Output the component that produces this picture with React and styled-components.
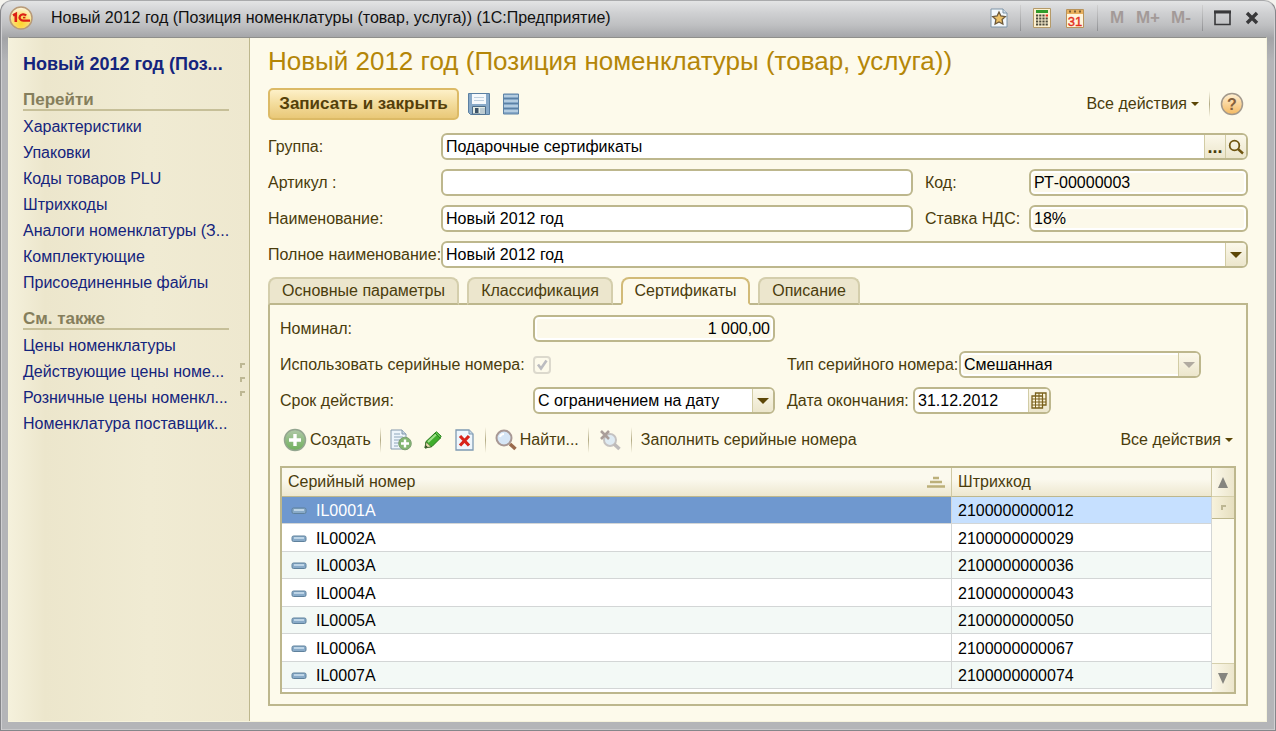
import React from 'react';
import styled, { createGlobalStyle, css } from 'styled-components';

const line = '#bdb78d';
const ink = '#4a3c0c';

const GlobalStyle = createGlobalStyle`
  * { box-sizing: border-box; }
  body {
    margin: 0;
    background: #f4f3ee;
    font: 16px/20px "Liberation Sans", Arial, sans-serif;
    color: ${ink};
  }
  button, input, select { font: inherit; color: inherit; }
  button { padding: 0; border: 0; background: none; }
`;

const Window = styled.div`
  min-height: 100vh;
  display: flex;
  flex-direction: column;
  padding: 0 8px 8px 7px;
  border: 1px solid #85868a;
  border-top-color: #a9aaac;
  border-radius: 12px 12px 0 0;
  background: linear-gradient(#e3e4e5 0, #cfd0d2 12px, #bfc0c2 24px, #a3a4a7 37px, #b4b5b8 60px, #b4b5b8 100%);
  box-shadow: inset 1px 0 #d0d0d2, inset -1px 0 #d0d0d2, inset 0 -1px #c8c8ca;
`;

const TitleBar = styled.header`
  height: 36px;
  display: flex;
  align-items: center;
  padding: 0 4px 3px 1px;
  color: #111;
`;

const Caption = styled.span`
  flex: 1;
  margin-left: 18px;
  white-space: nowrap;
  overflow: hidden;
`;

const WindowTools = styled.div`
  display: flex;
  align-items: center;
  gap: 10px;
`;

const IconButton = styled.button`
  display: flex;
  align-items: center;
  justify-content: center;
  flex: none;
  width: ${(p) => p.$width || 22}px;
  height: 24px;
`;

const MemoryButton = styled(IconButton)`
  font: bold 17px/20px "Liberation Sans", Arial, sans-serif;
  color: #a39a98;
`;

const BarDivider = styled.i`
  width: 1px;
  height: 26px;
  background: linear-gradient(#d0d0d0, #909194);
`;

const Body = styled.div`
  flex: 1;
  display: flex;
  border: 1px solid #f6f3dc;
  border-top-color: #8f8f8b;
  background: #fdfaeb;
`;

const Sidebar = styled.aside`
  flex: none;
  width: 241px;
  display: flex;
  padding-left: 14px;
  border-right: 1px solid ${line};
  background: linear-gradient(90deg, #f5f1dc, #ece6cc 36px, #f0ebd3 140px, #eee8cf);
`;

const Nav = styled.nav`
  flex: 1;
  min-width: 0;
  padding-top: 13px;
`;

const NavTitle = styled.a`
  display: block;
  font: bold 18px/26px "Liberation Sans", Arial, sans-serif;
  color: #14247d;
  text-decoration: none;
  white-space: nowrap;
`;

const NavHeading = styled.h2`
  margin: 14px 0 3px;
  border-bottom: 2px solid #c6bf98;
  font: bold 17px/18px "Liberation Sans", Arial, sans-serif;
  color: #857e5c;
`;

const NavLink = styled.a`
  display: block;
  line-height: 26px;
  color: #14247d;
  text-decoration: none;
  white-space: nowrap;
`;

const Splitter = styled.div`
  width: 20px;
  display: flex;
  flex-direction: column;
  align-items: flex-end;
  justify-content: center;
  gap: 9px;
  padding-right: 4px;
`;

const Grip = styled.i`
  width: 5px;
  height: 5px;
  border: solid #bdb793;
  border-width: 2px 0 0 2px;
`;

const Main = styled.main`
  flex: 1;
  min-width: 0;
  display: flex;
  flex-direction: column;
  padding: 9px 18px 15px 18px;
`;

const Heading = styled.h1`
  margin: 0;
  font: 26px/28px "Liberation Sans", Arial, sans-serif;
  color: #b48608;
  white-space: nowrap;
`;

const CommandBar = styled.div`
  display: flex;
  align-items: center;
  gap: 10px;
  padding-right: 4px;
  margin: 13px 0;
`;

const PrimaryButton = styled.button`
  height: 32px;
  width: 191px;
  margin-right: -1px;
  border: 2px solid #dcba66;
  border-radius: 5px;
  background: linear-gradient(#fdf0c8, #f3dc9c 50%, #e9c878);
  font-weight: bold;
  font-size: 17px;
  color: #54400a;
  white-space: nowrap;
`;

const Spacer = styled.span`
  flex: 1;
`;

const MenuButton = styled.button`
  display: flex;
  align-items: center;
  gap: 4px;
  white-space: nowrap;
`;

const Caret = styled.i`
  border: solid transparent;
  border-width: ${(p) => (p.$large ? '6px 6px 0' : '4px 4px 0')};
  border-top-color: ${(p) => (p.$dim ? '#b0aaa0' : '#5c4606')};
`;

const Divider = styled.i`
  width: 1px;
  height: 26px;
  background: linear-gradient(#fdfaeb, #b3ab85, #fdfaeb);
`;

const Fields = styled.div`
  display: grid;
  grid-template-columns: 173px minmax(0, 1fr) 116px 219px;
  row-gap: 9px;
  align-items: center;
`;

const Label = styled.label`
  width: ${(p) => (p.$width ? p.$width + 'px' : 'auto')};
  padding-left: ${(p) => (p.$inset ? 12 : 0)}px;
  white-space: nowrap;
`;

const Box = styled.div`
  display: flex;
  width: ${(p) => (p.$width ? p.$width + 'px' : 'auto')};
  height: 27px;
  border: 2px solid ${line};
  border-radius: 6px;
  overflow: hidden;
  background: #fff;
  color: #000;
  ${(p) => p.$wide && css`grid-column: span 3;`}
  ${(p) => p.$readOnly && css`
    background: #fcf9ea;
    box-shadow: inset 0 0 0 2px #fff;
  `}
`;

const control = css`
  flex: 1;
  min-width: 0;
  height: 23px;
  padding: 1px 3px 0;
  border: 0;
  outline: 0;
  background: transparent;
  color: #000;
  opacity: 1;
`;

const TextInput = styled.input`
  ${control}
  text-align: ${(p) => (p.$right ? 'right' : 'left')};
`;

const Select = styled.select`
  ${control}
  appearance: none;
`;

const BoxButton = styled.button`
  flex: none;
  display: flex;
  align-items: center;
  justify-content: center;
  width: 21px;
  border-left: 1px solid #d2cca5;
  background: linear-gradient(#fbf8ea, #ece6cc);
  color: ${ink};
`;

const Dots = styled.span`
  font-weight: bold;
  font-size: 18px;
`;

const Tabs = styled.div`
  display: flex;
  gap: 8px;
  padding-top: 9px;
  margin-bottom: -2px;
`;

const Tab = styled.button`
  position: relative;
  height: 28px;
  width: ${(p) => p.$width}px;
  border: 2px solid ${(p) => (p.$active ? '#d2bb78' : '#d4ceac')};
  border-bottom: ${(p) => (p.$active ? '2px solid #fdfaeb' : `2px solid ${line}`)};
  border-radius: 8px 8px 0 0;
  background: ${(p) => (p.$active ? '#fdfaeb' : '#ece6cd')};
  color: ${ink};
  white-space: nowrap;
`;

const Panel = styled.section`
  flex: 1;
  display: flex;
  flex-direction: column;
  padding: 10px 10px;
  border: 2px solid ${line};
`;

const PanelRow = styled.div`
  display: flex;
  align-items: center;
  height: 27px;
  margin-bottom: 9px;
`;

const Cell = styled.div`
  width: 242px;
`;

const Tick = styled.span`
  display: grid;
  width: 18px;
  height: 18px;
  > * { grid-area: 1 / 1; }
  svg { pointer-events: none; }
`;

const CheckInput = styled.input`
  appearance: none;
  margin: 0;
  width: 18px;
  height: 18px;
  border: 2px solid #dcd9cd;
  border-radius: 4px;
`;

const ListBar = styled.div`
  display: flex;
  align-items: center;
  gap: 9px;
  height: 34px;
  padding: 0 3px;
  margin-bottom: 9px;
`;

const TextButton = styled.button`
  display: flex;
  align-items: center;
  gap: 3px;
  white-space: nowrap;
`;

const Grid = styled.div`
  display: flex;
  flex: 1;
  border: 2px solid ${line};
  background: #fff;
`;

const Table = styled.table`
  flex: 1;
  align-self: flex-start;
  table-layout: fixed;
  border-collapse: separate;
  border-spacing: 0;
`;

const HeadCell = styled.th`
  width: ${(p) => p.$width || 'auto'};
  height: 29px;
  padding: 0 6px;
  border-bottom: 1px solid ${line};
  border-right: 1px solid #cfc9a4;
  background: linear-gradient(#fbf9ee 40%, #ede7cf);
  font-weight: normal;
  text-align: left;
`;

const HeadLabel = styled.div`
  display: flex;
  align-items: center;
  justify-content: space-between;
`;

const Row = styled.tr`
  height: 28px;
  &:nth-child(odd) { height: 27px; }
`;

const DataCell = styled.td`
  padding: 2px 6px 0;
  border-bottom: 1px solid #d3d6d6;
  border-right: 1px solid #d3d6d6;
  color: ${(p) => (p.$key && p.$selected ? '#fff' : '#000')};
  background: ${(p) => (p.$selected ? (p.$key ? '#6f98cf' : '#c6e0ff') : p.$striped ? '#f3f9f6' : '#fff')};
`;

const KeyLabel = styled.div`
  display: flex;
  align-items: center;
  gap: 9px;
  padding-left: 3px;
`;

const ScrollBar = styled.div`
  flex: none;
  display: flex;
  flex-direction: column;
  width: 22px;
  background: #fdfbef;
`;

const ScrollButton = styled.button`
  display: flex;
  align-items: center;
  justify-content: center;
  height: 29px;
  border: 1px solid #d6d0ac;
  border-width: ${(p) => (p.$down ? '1px 0 0' : '0 0 1px')};
  background: linear-gradient(90deg, #fbf8ea, #ece6cc);
`;

const Thumb = styled.div`
  display: flex;
  align-items: center;
  justify-content: center;
  height: 22px;
  border-bottom: 1px solid ${line};
  background: linear-gradient(90deg, #f7f2dc, #e6dfbf);
`;

const IconText = styled.text`
  font-family: "Liberation Sans", Arial, sans-serif;
  font-size: ${(p) => p.$size}px;
  font-weight: ${(p) => (p.$bold ? 'bold' : 'normal')};
  text-anchor: middle;
`;

const Logo = () => (
  <svg width="24" height="24" viewBox="0 0 24 24" aria-hidden="true">
    <defs>
      <radialGradient id="lg" cx=".5" cy=".75" r=".75">
        <stop offset="0" stopColor="#ffd42c" /><stop offset=".55" stopColor="#fbe07c" /><stop offset="1" stopColor="#fff8e4" />
      </radialGradient>
    </defs>
    <circle cx="12" cy="12" r="11" fill="url(#lg)" stroke="#b89a78" strokeWidth="1.5" />
    <path d="M4 9.300 6.800 7.800V16" fill="none" stroke="#dc1f14" strokeWidth="2.600" />
    <path d="M17.200 9.600a3.700 3.100 0 1 0-2.900 5H21" fill="none" stroke="#dc1f14" strokeWidth="2.200" />
    <path d="M14 11.600h2.400" stroke="#dc1f14" strokeWidth="1.600" />
  </svg>
);

const StarPage = () => (
  <svg width="18" height="20" viewBox="0 0 18 20">
    <path d="M1 1h12l4 4v14H1z" fill="#f3f8fc" stroke="#7f95a8" />
    <path d="M13 1v4h4" fill="#cfdde8" stroke="#7f95a8" />
    <path d="m9 4 1.900 4 4.400.6-3.200 3 .8 4.400L9 13.900 5.100 16l.8-4.400-3.200-3 4.400-.6z" fill="#ecc16a" stroke="#6d5a3c" strokeWidth="1.300" />
  </svg>
);

const Calculator = () => (
  <svg width="18" height="20" viewBox="0 0 18 20">
    <path d="M.5.5h17v19H.5z" fill="#fbf0d0" stroke="#b59a68" />
    <path d="M3 2h12v3H3z" fill="#2f9b2a" />
    <path d="M3 7.500h9M3 10.500h12M3 13.500h12M3 16.500h12" stroke="#4c4a3c" strokeWidth="1.800" strokeDasharray="2.200 1" />
    <path d="M12.600 7.500h2.400" stroke="#e03020" strokeWidth="2" />
  </svg>
);

const Calendar31 = () => (
  <svg width="18" height="20" viewBox="0 0 18 20">
    <path d="M.5 1.500h17v18H.5z" fill="#fff4dc" stroke="#b8935a" />
    <path d="M1 2h16v4H1z" fill="#e8b05e" />
    <path d="M3 3.500h2M8 3.500h2M13 3.500h2" stroke="#7c5f33" strokeWidth="2" />
    <IconText x="9" y="17.500" $size={13} fill="#e3301c" stroke="#e3301c" strokeWidth=".4">31</IconText>
  </svg>
);

const Maximize = () => (
  <svg width="17" height="16" viewBox="0 0 17 16">
    <path d="M1 1.500h15v13H1z" fill="none" stroke="#38383a" strokeWidth="1.600" /><path d="M0 2h17" stroke="#38383a" strokeWidth="3" />
  </svg>
);

const Close = () => (
  <svg width="14" height="14" viewBox="0 0 14 14"><path d="m2 2 10 10M12 2 2 12" stroke="#38383a" strokeWidth="3.400" /></svg>
);

const Floppy = () => (
  <svg width="22" height="22" viewBox="0 0 22 22">
    <path d="M.5.5h21v21h-19l-2-2z" fill="#88a9c8" stroke="#5b80a2" />
    <path d="M4 1h14v10H4z" fill="#f6f9fc" /><path d="M6 4.500h10M6 7.500h10" stroke="#c0d0de" />
    <path d="M4.500 13.500h13V21h-13z" fill="#e4ebe4" stroke="#4e6d88" /><path d="M7 15h3.500v5H7z" fill="#3e5468" /><path d="M12 15h5v6h-5z" fill="#bccbd2" />
  </svg>
);

const Stack = () => (
  <svg width="16" height="22" viewBox="0 0 16 22">
    <path d="M.5 1h15v20H.5z" fill="#86a8c8" stroke="#5f83a6" />
    <path d="M1 3h14M1 8h14M1 13h14M1 18h14" stroke="#b4cce0" strokeWidth="2" /><path d="M1 5.500h14M1 10.500h14M1 15.500h14" stroke="#5b80a4" />
  </svg>
);

const Help = () => (
  <svg width="24" height="24" viewBox="0 0 24 24">
    <defs><linearGradient id="hp" x1="0" y1="0" x2="0" y2="1"><stop offset="0" stopColor="#fff0d4" /><stop offset="1" stopColor="#f4b961" /></linearGradient></defs>
    <circle cx="12" cy="12" r="10.500" fill="url(#hp)" stroke="#a3998c" strokeWidth="1.500" />
    <IconText x="12" y="17.500" $size={16} $bold fill="#85603c">?</IconText>
  </svg>
);

const Magnifier = () => (
  <svg width="16" height="16" viewBox="0 0 16 16"><circle cx="6.500" cy="6.500" r="4.800" fill="none" stroke="#6f5510" strokeWidth="1.800" /><path d="m10 10 5 4.500" stroke="#6f5510" strokeWidth="2.400" /></svg>
);

const DateGrid = () => (
  <svg width="16" height="17" viewBox="0 0 16 17">
    <path d="M4.500 1h10.500v12H4.500z" fill="#fbf5dc" stroke="#7a611c" strokeWidth="1.300" />
    <path d="M1 4h10.500v12H1z" fill="#fbf5dc" stroke="#7a611c" strokeWidth="1.300" />
    <path d="M1 7h14M1 10h14M1 13h10.500M4.500 4v12M8 1v15M11.500 1v12" stroke="#7a611c" />
  </svg>
);

const Check = () => (
  <svg width="18" height="18" viewBox="0 0 18 18"><path d="m5 8.500 3 4 5.500-8" fill="none" stroke="#bcbcc0" strokeWidth="2.600" /></svg>
);

const PlusBall = () => (
  <svg width="24" height="24" viewBox="0 0 24 24">
    <defs><linearGradient id="pb" x1="0" y1="0" x2="0" y2="1"><stop offset="0" stopColor="#b0c8a8" /><stop offset="1" stopColor="#6fb05c" /></linearGradient></defs>
    <circle cx="12" cy="12" r="10.500" fill="url(#pb)" stroke="#93a58f" strokeWidth="1.500" />
    <path d="M12 6v12M6 12h12" stroke="#fff" strokeWidth="3.400" />
  </svg>
);

const CopyAdd = () => (
  <svg width="22" height="22" viewBox="0 0 22 22">
    <path d="M1 1h11l4 4v15H1z" fill="#eef5fb" stroke="#8499ac" /><path d="M12 1v4h4" fill="#c6d6e4" stroke="#8499ac" />
    <path d="M4 5h6M4 8h9M4 11h7M4 14h5M4 17h4" stroke="#8ea6bb" />
    <circle cx="15" cy="14.500" r="6.300" fill="#83b672" stroke="#7d9f73" /><path d="M15 10.500v8M11 14.500h8" stroke="#fff" strokeWidth="2.400" />
  </svg>
);

const Pencil = () => (
  <svg width="18" height="18" viewBox="0 0 18 18">
    <path d="m1 17 1-6.500L11 2l5.500 5-8.500 8.500z" fill="#3fae2c" stroke="#23761a" />
    <path d="m4 11 8-7.500" stroke="#9fe08a" strokeWidth="2" /><path d="m11 2 1.500-1.200 4.700 4.400L16 7z" fill="#63c64e" stroke="#2a8420" />
    <path d="m1 17 1.200-6 5 4.800z" fill="#e6dcae" stroke="#4a6a34" strokeWidth=".8" /><path d="m1 17 .7-3 2.300 2.200z" fill="#2e4a26" />
  </svg>
);

const DeletePage = () => (
  <svg width="19" height="22" viewBox="0 0 19 22">
    <path d="M1 1h13l4 4v16H1z" fill="#eef6fc" stroke="#7f9ab2" strokeWidth="1.300" /><path d="M14 1v4h4" fill="#c6d6e4" stroke="#7f9ab2" />
    <path d="m5 7 9 9.500M14 7l-9 9.500" stroke="#d8231a" strokeWidth="3.200" />
  </svg>
);

const Find = ({ off }) => (
  <svg width="22" height="22" viewBox="0 0 22 22" opacity={off ? 0.75 : 1}>
    <circle cx={off ? 11 : 9} cy={off ? 11 : 9} r={off ? 6 : 7.5} fill="#d6e6f6" stroke={off ? '#b3b0b3' : '#a89894'} strokeWidth="2" />
    <path d="m15 15 5.500 5" stroke={off ? '#aaa6aa' : '#9a6a4c'} strokeWidth="3.600" />
    {off ? <path d="m2 2 8 8M10 2 2 10" stroke="#8f8080" strokeWidth="2.600" /> : <path d="M5 8a4 4 0 0 1 4-3" stroke="#fff" strokeWidth="2" fill="none" />}
  </svg>
);

const SortMark = () => (
  <svg width="18" height="12" viewBox="0 0 18 12"><path d="M6 2h6M3 6h12M0 10.500h18" stroke="#bcb07a" strokeWidth="2.600" /></svg>
);

const RowMark = () => (
  <svg width="16" height="8" viewBox="0 0 16 8"><rect x="1" y="1" width="14" height="5.500" rx="1.500" fill="#88aac8" stroke="#5f819c" /><path d="M3 3h10" stroke="#cfe2f0" strokeWidth="1.500" /></svg>
);

const Arrow = ({ down }) => (
  <svg width="10" height="11" viewBox="0 0 10 11"><path d={down ? 'M0 0h10L5 11z' : 'M5 0l5 11H0z'} fill="#85857f" /></svg>
);

const goTo = ['Характеристики', 'Упаковки', 'Коды товаров PLU', 'Штрихкоды', 'Аналоги номенклатуры (З...', 'Комплектующие', 'Присоединенные файлы'];
const seeAlso = ['Цены номенклатуры', 'Действующие цены номе...', 'Розничные цены номенкл...', 'Номенклатура поставщик...'];
const tabs = [['Основные параметры', 191], ['Классификация', 146], ['Сертификаты', 129], ['Описание', 102]];
const rows = [
  ['IL0001A', '2100000000012'],
  ['IL0002A', '2100000000029'],
  ['IL0003A', '2100000000036'],
  ['IL0004A', '2100000000043'],
  ['IL0005A', '2100000000050'],
  ['IL0006A', '2100000000067'],
  ['IL0007A', '2100000000074'],
];

export default function App() {
  return (
    <>
      <GlobalStyle />
      <Window>
        <TitleBar>
          <Logo />
          <Caption>Новый 2012 год (Позиция номенклатуры (товар, услуга)) (1С:Предприятие)</Caption>
          <WindowTools>
            <IconButton aria-label="Избранное"><StarPage /></IconButton>
            <BarDivider />
            <IconButton aria-label="Калькулятор"><Calculator /></IconButton>
            <IconButton aria-label="Календарь" $width={24}><Calendar31 /></IconButton>
            <BarDivider />
            <MemoryButton $width={18}>M</MemoryButton>
            <MemoryButton $width={24}>M+</MemoryButton>
            <MemoryButton>M-</MemoryButton>
            <BarDivider />
            <IconButton aria-label="Развернуть" $width={18}><Maximize /></IconButton>
            <IconButton aria-label="Закрыть"><Close /></IconButton>
          </WindowTools>
        </TitleBar>
        <Body>
          <Sidebar>
            <Nav>
              <NavTitle href="#">Новый 2012 год (Поз...</NavTitle>
              <NavHeading>Перейти</NavHeading>
              {goTo.map((t) => <NavLink href="#" key={t}>{t}</NavLink>)}
              <NavHeading>См. также</NavHeading>
              {seeAlso.map((t) => <NavLink href="#" key={t}>{t}</NavLink>)}
            </Nav>
            <Splitter><Grip /><Grip /><Grip /></Splitter>
          </Sidebar>
          <Main>
            <Heading>Новый 2012 год (Позиция номенклатуры (товар, услуга))</Heading>
            <CommandBar>
              <PrimaryButton>Записать и закрыть</PrimaryButton>
              <IconButton aria-label="Записать"><Floppy /></IconButton>
              <IconButton aria-label="Список"><Stack /></IconButton>
              <Spacer />
              <MenuButton>Все действия <Caret /></MenuButton>
              <Divider />
              <IconButton aria-label="Справка" $width={24}><Help /></IconButton>
            </CommandBar>
            <Fields>
              <Label htmlFor="group">Группа:</Label>
              <Box $wide>
                <TextInput id="group" defaultValue="Подарочные сертификаты" />
                <BoxButton aria-label="Выбрать"><Dots>...</Dots></BoxButton>
                <BoxButton aria-label="Открыть"><Magnifier /></BoxButton>
              </Box>
              <Label htmlFor="article">Артикул :</Label>
              <Box><TextInput id="article" /></Box>
              <Label htmlFor="code" $inset>Код:</Label>
              <Box $readOnly><TextInput id="code" readOnly value="РТ-00000003" /></Box>
              <Label htmlFor="name">Наименование:</Label>
              <Box><TextInput id="name" defaultValue="Новый 2012 год" /></Box>
              <Label htmlFor="vat" $inset>Ставка НДС:</Label>
              <Box $readOnly><TextInput id="vat" readOnly value="18%" /></Box>
              <Label htmlFor="full">Полное наименование:</Label>
              <Box $wide>
                <TextInput id="full" defaultValue="Новый 2012 год" />
                <BoxButton aria-label="Показать список"><Caret $large /></BoxButton>
              </Box>
            </Fields>
            <Tabs role="tablist">
              {tabs.map(([name, width], i) => (
                <Tab key={name} role="tab" aria-selected={i === 2} $active={i === 2} $width={width}>{name}</Tab>
              ))}
            </Tabs>
            <Panel>
              <PanelRow>
                <Label htmlFor="nominal" $width={253}>Номинал:</Label>
                <Box $width={242} $readOnly><TextInput id="nominal" $right readOnly value="1 000,00" /></Box>
              </PanelRow>
              <PanelRow>
                <Label htmlFor="serial" $width={253}>Использовать серийные номера:</Label>
                <Cell><Tick><CheckInput id="serial" type="checkbox" defaultChecked disabled /><Check /></Tick></Cell>
                <Label htmlFor="kind" $width={184} $inset>Тип серийного номера:</Label>
                <Box $width={242} $readOnly>
                  <Select id="kind" disabled><option>Смешанная</option></Select>
                  <BoxButton as="span"><Caret $large $dim /></BoxButton>
                </Box>
              </PanelRow>
              <PanelRow>
                <Label htmlFor="term" $width={253}>Срок действия:</Label>
                <Box $width={242}>
                  <Select id="term"><option>С ограничением на дату</option></Select>
                  <BoxButton as="span"><Caret $large /></BoxButton>
                </Box>
                <Label htmlFor="end" $width={138} $inset>Дата окончания:</Label>
                <Box $width={138}>
                  <TextInput id="end" defaultValue="31.12.2012" />
                  <BoxButton aria-label="Выбрать дату"><DateGrid /></BoxButton>
                </Box>
              </PanelRow>
              <ListBar>
                <TextButton><PlusBall />Создать</TextButton>
                <Divider />
                <IconButton aria-label="Скопировать"><CopyAdd /></IconButton>
                <IconButton aria-label="Изменить" $width={24}><Pencil /></IconButton>
                <IconButton aria-label="Удалить"><DeletePage /></IconButton>
                <Divider />
                <TextButton><Find />Найти...</TextButton>
                <Divider />
                <IconButton aria-label="Отменить поиск" $width={24}><Find off /></IconButton>
                <Divider />
                <TextButton>Заполнить серийные номера</TextButton>
                <Spacer />
                <MenuButton>Все действия <Caret /></MenuButton>
              </ListBar>
              <Grid>
                <Table>
                  <thead>
                    <tr>
                      <HeadCell><HeadLabel>Серийный номер<SortMark /></HeadLabel></HeadCell>
                      <HeadCell $width="260px">Штрихкод</HeadCell>
                    </tr>
                  </thead>
                  <tbody>
                    {rows.map(([serial, code], i) => (
                      <Row key={serial}>
                        <DataCell $key $selected={i === 0} $striped={i % 2 === 0}><KeyLabel><RowMark />{serial}</KeyLabel></DataCell>
                        <DataCell $selected={i === 0} $striped={i % 2 === 0}>{code}</DataCell>
                      </Row>
                    ))}
                  </tbody>
                </Table>
                <ScrollBar>
                  <ScrollButton aria-label="Вверх"><Arrow /></ScrollButton>
                  <Thumb><Grip /></Thumb>
                  <Spacer />
                  <ScrollButton aria-label="Вниз" $down><Arrow down /></ScrollButton>
                </ScrollBar>
              </Grid>
            </Panel>
          </Main>
        </Body>
      </Window>
    </>
  );
}
